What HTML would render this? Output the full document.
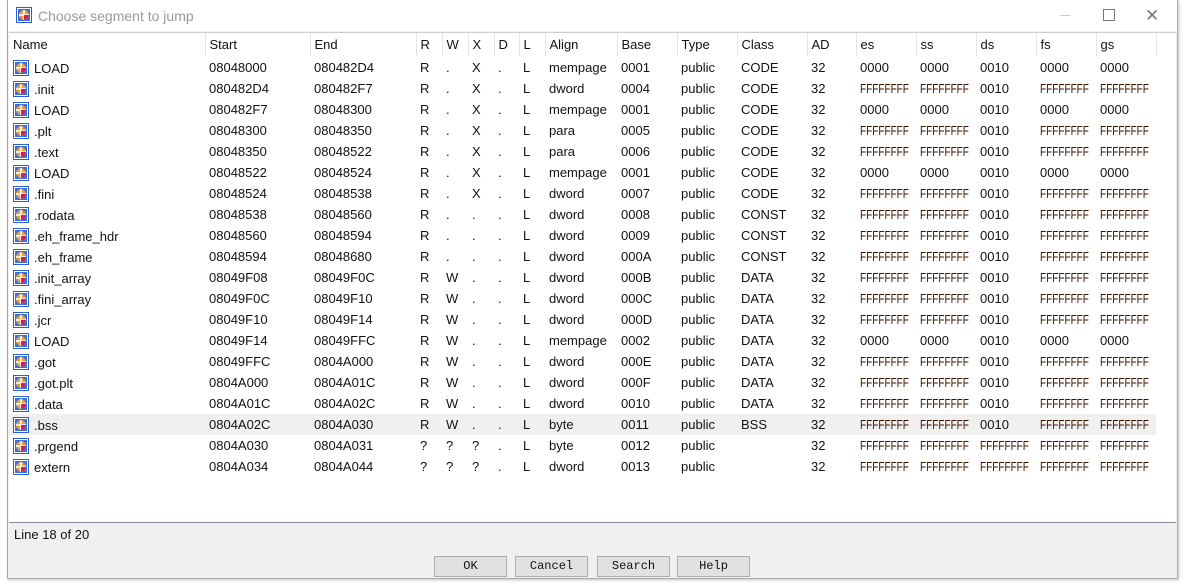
<!DOCTYPE html>
<html><head><meta charset="utf-8"><style>
body{margin:0;width:1184px;height:586px;background:#fff;position:relative;overflow:hidden;font-family:"Liberation Sans",Arial,sans-serif;font-size:13px;color:#111}
.win{position:absolute;left:7px;top:0;width:1169px;height:578px;background:#f0f0f0;border:1px solid #aaa;border-top:none;box-shadow:1px 1px 3px rgba(0,0,0,.25)}
.title{position:absolute;left:0;top:0;width:1169px;height:31px;background:#fff}
.title .t{position:absolute;left:30px;top:8px;color:#999;font-size:14px}
.list{position:absolute;left:1px;top:32px;width:1167px;height:489px;background:#fff;border-top:1px solid #ccc;border-bottom:1px solid #8a8a9a}
table{border-collapse:collapse;table-layout:fixed;position:absolute;left:0;top:0;width:1147px}
td,th{padding:0 0 0 4px;white-space:nowrap;overflow:hidden;text-align:left;font-weight:normal;height:21px}
th{height:23px;border-right:1px solid #e5e5e5}
tr.sel td{background:#f0f0f0}
.f span{color:#3a1500;display:inline-block;transform:scaleX(.77);transform-origin:left center}
.ic{display:inline-block;vertical-align:-3px;margin-right:5px}
.btn{position:absolute;top:556px;width:71px;height:19px;border:1px solid #adadad;background:#e1e1e1;font-family:"Liberation Mono",monospace;font-size:12px;text-align:center;line-height:19px}
</style></head><body>
<div class="win">
<div class="title">
<svg style="position:absolute;left:8px;top:7px" width="16" height="16" viewBox="0 0 16 16"><rect x="0.5" y="0.5" width="15" height="15" fill="#fff" stroke="#2a5fd0"/><rect x="2" y="2" width="12" height="12" fill="#3a6fe0"/><circle cx="8" cy="8" r="5" fill="#f0a030"/><path d="M8 3v10M3 8h10" stroke="#fff" stroke-width="1.5"/><path d="M8 8h5a5 5 0 0 1-5 5z" fill="#d02060"/></svg>
<span class="t">Choose segment to jump</span>
<div style="position:absolute;left:1052px;top:15px;width:10px;height:1px;background:#ccc"></div>
<div style="position:absolute;left:1095px;top:9px;width:10px;height:10px;border:1px solid #777"></div>
<div style="position:absolute;left:1137px;top:6px;color:#777;font-size:17px">✕</div>
</div>
<div class="list">
<table>
<colgroup><col style="width:196px"><col style="width:105px"><col style="width:106px"><col style="width:26px"><col style="width:26px"><col style="width:26px"><col style="width:25px"><col style="width:26px"><col style="width:72px"><col style="width:60px"><col style="width:60px"><col style="width:70px"><col style="width:49px"><col style="width:60px"><col style="width:60px"><col style="width:60px"><col style="width:60px"><col style="width:60px"></colgroup>
<tr><th>Name</th><th>Start</th><th>End</th><th>R</th><th>W</th><th>X</th><th>D</th><th>L</th><th>Align</th><th>Base</th><th>Type</th><th>Class</th><th>AD</th><th>es</th><th>ss</th><th>ds</th><th>fs</th><th>gs</th></tr>
</table>
<table id="t" style="top:24px"></table>
</div>
<div style="position:absolute;left:6px;top:527px">Line 18 of 20</div>
<div class="btn" style="left:426px">OK</div>
<div class="btn" style="left:507px">Cancel</div>
<div class="btn" style="left:589px">Search</div>
<div class="btn" style="left:669px">Help</div>
</div>
<script>
var rows=[
["LOAD","08048000","080482D4","R",".","X",".","L","mempage","0001","public","CODE","32","0000","0000","0010","0000","0000"],
[".init","080482D4","080482F7","R",".","X",".","L","dword","0004","public","CODE","32","F","F","0010","F","F"],
["LOAD","080482F7","08048300","R",".","X",".","L","mempage","0001","public","CODE","32","0000","0000","0010","0000","0000"],
[".plt","08048300","08048350","R",".","X",".","L","para","0005","public","CODE","32","F","F","0010","F","F"],
[".text","08048350","08048522","R",".","X",".","L","para","0006","public","CODE","32","F","F","0010","F","F"],
["LOAD","08048522","08048524","R",".","X",".","L","mempage","0001","public","CODE","32","0000","0000","0010","0000","0000"],
[".fini","08048524","08048538","R",".","X",".","L","dword","0007","public","CODE","32","F","F","0010","F","F"],
[".rodata","08048538","08048560","R",".",".",".","L","dword","0008","public","CONST","32","F","F","0010","F","F"],
[".eh_frame_hdr","08048560","08048594","R",".",".",".","L","dword","0009","public","CONST","32","F","F","0010","F","F"],
[".eh_frame","08048594","08048680","R",".",".",".","L","dword","000A","public","CONST","32","F","F","0010","F","F"],
[".init_array","08049F08","08049F0C","R","W",".",".","L","dword","000B","public","DATA","32","F","F","0010","F","F"],
[".fini_array","08049F0C","08049F10","R","W",".",".","L","dword","000C","public","DATA","32","F","F","0010","F","F"],
[".jcr","08049F10","08049F14","R","W",".",".","L","dword","000D","public","DATA","32","F","F","0010","F","F"],
["LOAD","08049F14","08049FFC","R","W",".",".","L","mempage","0002","public","DATA","32","0000","0000","0010","0000","0000"],
[".got","08049FFC","0804A000","R","W",".",".","L","dword","000E","public","DATA","32","F","F","0010","F","F"],
[".got.plt","0804A000","0804A01C","R","W",".",".","L","dword","000F","public","DATA","32","F","F","0010","F","F"],
[".data","0804A01C","0804A02C","R","W",".",".","L","dword","0010","public","DATA","32","F","F","0010","F","F"],
[".bss","0804A02C","0804A030","R","W",".",".","L","byte","0011","public","BSS","32","F","F","0010","F","F"],
[".prgend","0804A030","0804A031","?","?","?",".","L","byte","0012","public","","32","F","F","F","F","F"],
["extern","0804A034","0804A044","?","?","?",".","L","dword","0013","public","","32","F","F","F","F","F"]];
var ic='<svg class="ic" width="16" height="16" viewBox="0 0 16 16"><rect x="0.5" y="0.5" width="15" height="15" fill="#fff" stroke="#2a5fd0"/><rect x="2" y="2" width="12" height="12" fill="#3a6fe0"/><circle cx="8" cy="8" r="5" fill="#f0a030"/><path d="M8 3v10M3 8h10" stroke="#fff" stroke-width="1.5"/><path d="M8 8h5a5 5 0 0 1-5 5z" fill="#d02060"/></svg>';
var cg=document.querySelector('colgroup').outerHTML,h=cg;
rows.forEach(function(r,i){h+='<tr'+(i==17?' class="sel"':'')+'>';r.forEach(function(c,j){
if(j==0)h+='<td style="padding-left:4px">'+ic+c+'</td>';
else if(c=="F")h+='<td class="f"><span>FFFFFFFF</span></td>';
else h+='<td>'+c+'</td>';});h+='</tr>';});
document.getElementById('t').innerHTML=h;
</script>
</body></html>
